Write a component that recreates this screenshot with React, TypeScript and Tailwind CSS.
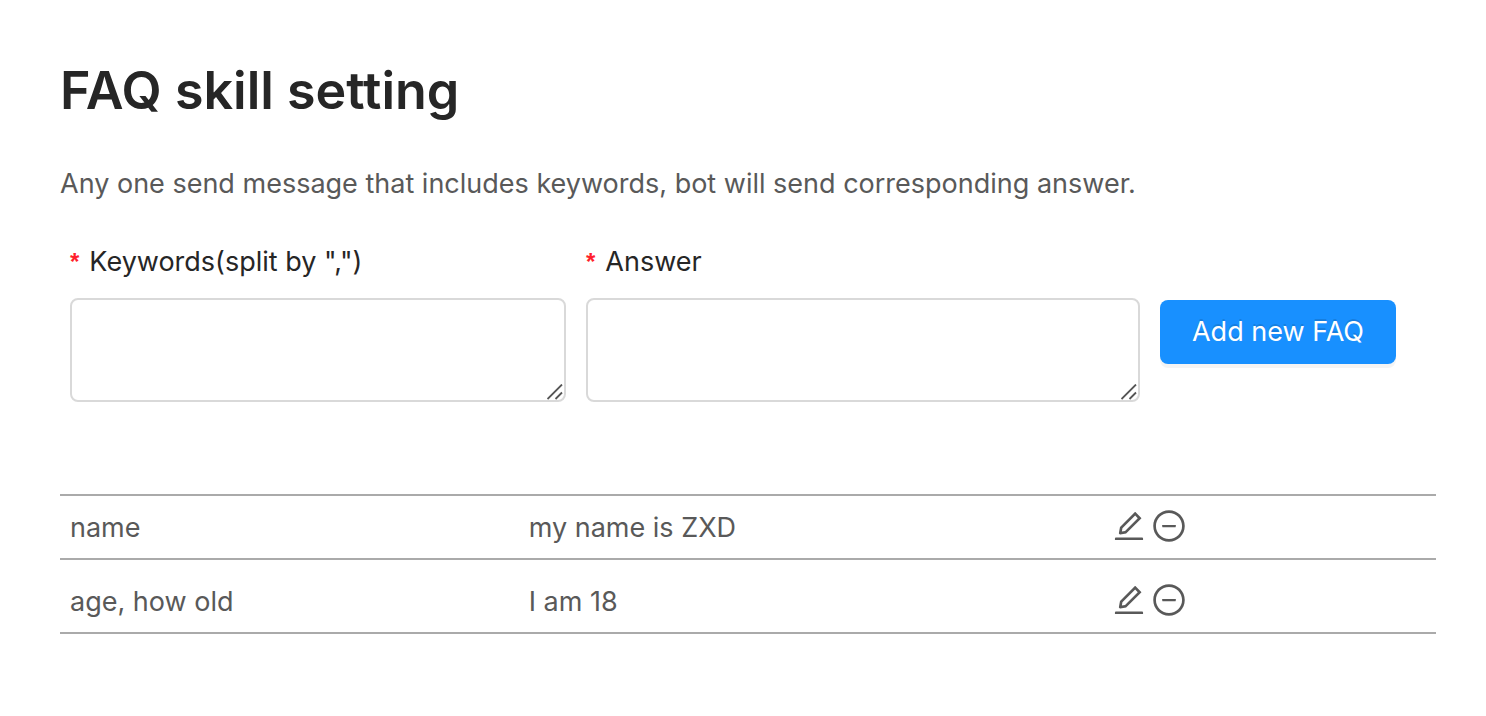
import React from "react";
import { AiOutlineEdit, AiOutlineMinusCircle } from "react-icons/ai";

const faqs = [
  { keywords: "name", answer: "my name is ZXD" },
  { keywords: "age, how old", answer: "I am 18" },
];

function Field({ id, label, className }: { id: string; label: string; className: string }) {
  return (
    <div className={className}>
      <label htmlFor={id} className="flex h-12 items-center text-[#262626]">
        <span className="mr-2.5 font-['Liberation_Sans',sans-serif] text-2xl leading-11 font-bold text-[#ff1f2d]" aria-hidden="true">*</span>
        {label}
      </label>
      <div className="relative mt-3">
        <textarea
          id={id}
          required
          className="block h-26 w-full resize-none rounded-lg border-2 border-[#d9d9d9] bg-white px-5 py-2 text-[#262626] outline-none"
        />
        <svg className="pointer-events-none absolute right-[3px] bottom-0.5 size-4" viewBox="0 0 16 16" fill="none" stroke="#555555" strokeWidth="1.8" aria-hidden="true">
          <path d="M0.5 15 15 0.5M8.5 15 15 8.5" />
        </svg>
      </div>
    </div>
  );
}

export default function App() {
  return (
    <main className="pt-14 pr-[50px] pb-20 pl-15 font-['Inter',sans-serif] text-[27px] leading-11 text-[#595959]">
      <h1 className="text-[52px] leading-[70px] font-semibold text-[#262626]">FAQ skill setting</h1>
      <p className="mt-9">Any one send message that includes keywords, bot will send corresponding answer.</p>
      <form className="mt-8 flex items-start gap-5 pr-10 pl-2.5" onSubmit={(e) => e.preventDefault()}>
        <Field id="keywords" label={'Keywords(split by ",")'} className="min-w-0 flex-[496]" />
        <Field id="answer" label="Answer" className="min-w-0 flex-[554]" />
        <button type="submit" className="mt-[62px] h-16 w-[236px] shrink-0 rounded-lg bg-[#1890ff] text-white shadow-[0_4px_0_rgba(0,0,0,0.045)] [text-shadow:0_-2px_0_rgba(0,0,0,0.12)]">
          Add new FAQ
        </button>
      </form>
      <table className="mt-23 w-full table-fixed border-collapse">
        <colgroup>
          <col className="w-1/3" />
          <col className="w-[42.3%]" />
          <col />
        </colgroup>
        <tbody>
          {faqs.map((faq) => (
            <tr key={faq.keywords} className="border-y-2 border-[#aaaaaa] align-top *:px-2.5 *:pt-5 *:pb-2 first:*:pt-2.5">
              <td>{faq.keywords}</td>
              <td>{faq.answer}</td>
              <td>
                <div className="flex h-10 items-center gap-1">
                  <button type="button" aria-label="Edit"><AiOutlineEdit className="size-9" /></button>
                  <button type="button" aria-label="Remove"><AiOutlineMinusCircle className="size-9" /></button>
                </div>
              </td>
            </tr>
          ))}
        </tbody>
      </table>
    </main>
  );
}
